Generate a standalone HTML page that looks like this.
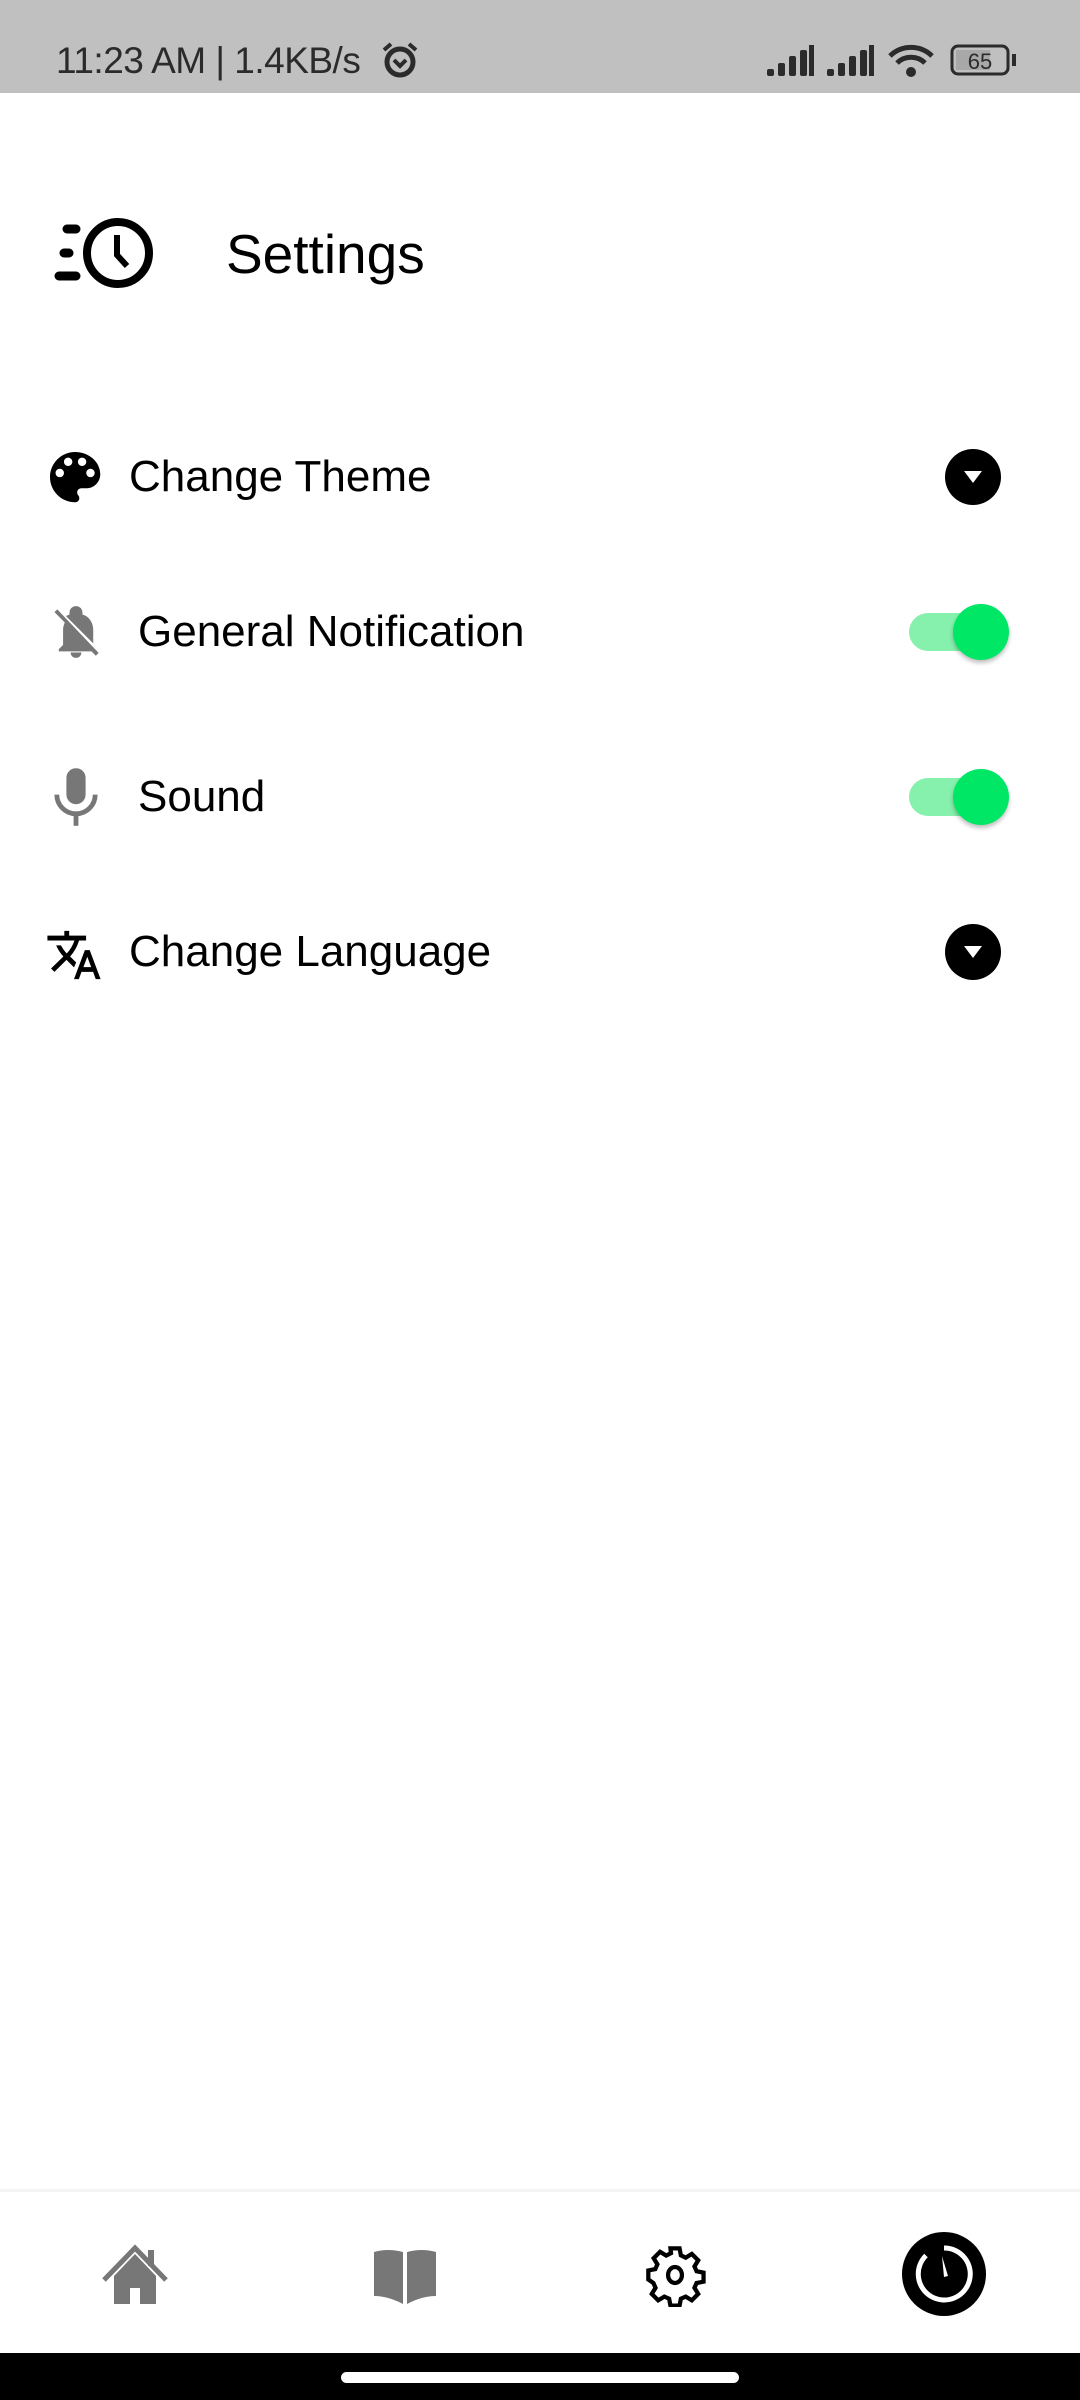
<!DOCTYPE html>
<html><head><meta charset="utf-8"><style>
*{margin:0;padding:0;box-sizing:border-box}
body{width:1080px;height:2400px;background:#fff;position:relative;overflow:hidden;font-family:"Liberation Sans",sans-serif;color:#000}
.a{position:absolute}
.sb{left:0;top:0;width:1080px;height:93px;background:#c0c0c0}
.t{font-size:44px;line-height:1;white-space:nowrap}
.dd{width:56px;height:56px;border-radius:50%;background:#000}
.dd:after{content:"";position:absolute;left:19px;top:22px;border-left:9px solid transparent;border-right:9px solid transparent;border-top:12px solid #fff}
.tr{width:86px;height:38px;border-radius:19px;background:#86f0ad}
.th{width:56px;height:56px;border-radius:50%;background:#00e766;box-shadow:0 3px 4px rgba(0,0,0,.25)}
</style></head><body>
<div class="a sb"></div>
<div class="a" style="left:56px;top:40px;font-size:37px;color:#2b2b2b;white-space:nowrap;letter-spacing:-0.5px">11:23 AM | 1.4KB/s</div>
<svg class="a" style="left:380px;top:40px" width="40" height="40" viewBox="0 0 40 40"><circle cx="20" cy="22" r="13" fill="none" stroke="#2b2b2b" stroke-width="5"/><path d="M14 20l6 6 6-6" fill="none" stroke="#2b2b2b" stroke-width="4"/><path d="M4 10l7-6M36 10l-7-6" stroke="#2b2b2b" stroke-width="4"/></svg>
<svg class="a" style="left:765px;top:44px" width="260" height="34" viewBox="0 0 260 34">
<g fill="#2b2b2b"><rect x="2" y="25" width="7" height="7" rx="2"/><rect x="13" y="19" width="7" height="13" rx="2"/><rect x="24" y="12" width="7" height="20" rx="2"/><rect x="35" y="6" width="7" height="26" rx="2"/><rect x="44" y="1" width="5" height="31"/>
<rect x="62" y="25" width="7" height="7" rx="2"/><rect x="73" y="19" width="7" height="13" rx="2"/><rect x="84" y="12" width="7" height="20" rx="2"/><rect x="95" y="6" width="7" height="26" rx="2"/><rect x="104" y="1" width="5" height="31"/></g>
<g fill="none" stroke="#2b2b2b" stroke-width="5"><path d="M125 12a30 30 0 0 1 42 0"/><path d="M132 19a20 20 0 0 1 28 0"/></g><circle cx="146" cy="28" r="5" fill="#2b2b2b"/>
<rect x="187" y="2" width="56" height="28" rx="6" fill="none" stroke="#2b2b2b" stroke-width="3"/><rect x="191" y="6" width="34" height="20" fill="#a8a8a8"/><rect x="247" y="10" width="4" height="12" fill="#2b2b2b"/>
<text x="215" y="25" font-size="22" fill="#2b2b2b" text-anchor="middle" font-family="Liberation Sans">65</text></svg>

<svg class="a" style="left:50px;top:210px" width="110" height="90" viewBox="50 210 110 90"><circle cx="118" cy="253" r="31" fill="none" stroke="#000" stroke-width="8"/><path d="M117 235v20l10 11" fill="none" stroke="#000" stroke-width="6"/><g stroke="#000" stroke-width="9" stroke-linecap="round"><path d="M67 229h9M64 253h5M59 276h17"/></g></svg>
<div class="a" style="left:226px;top:222px;font-size:55px;white-space:nowrap">Settings</div>

<svg class="a" style="left:50px;top:452px" width="67" height="67" viewBox="3 3 24 24"><path d="M12 3c-4.97 0-9 4.030-9 9s4.03 9 9 9c.83 0 1.5-.67 1.5-1.5 0-.39-.15-.74-.39-1.01-.23-.26-.38-.61-.38-.99 0-.83.67-1.5 1.5-1.5H16c2.76 0 5-2.24 5-5 0-4.42-4.03-8-9-8zm-5.5 9c-.83 0-1.5-.67-1.5-1.5S5.67 9 6.5 9 8 9.67 8 10.5 7.33 12 6.5 12zm3-4C8.67 8 8 7.33 8 6.5S8.67 5 9.5 5s1.5.67 1.5 1.5S10.33 8 9.5 8zm5 0c-.83 0-1.5-.67-1.5-1.5S13.67 5 14.5 5s1.5.67 1.5 1.5S15.33 8 14.5 8zm3 4c-.83 0-1.5-.67-1.5-1.5S16.67 9 17.5 9s1.5.67 1.5 1.5-.67 1.5-1.5 1.5z"/></svg>
<div class="a t" style="left:129px;top:455px">Change Theme</div>
<div class="a dd" style="left:945px;top:449px"></div>

<svg class="a" style="left:50px;top:604px" width="52" height="56" viewBox="0 0 24 26"><path fill="#777" d="M12 25c1.4 0 2.5-1.1 2.5-2.5h-5C9.5 23.9 10.6 25 12 25zm8-6V12c0-3.5-2.1-6.3-5-7.1V4c0-1.7-1.3-3-3-3S9 2.3 9 4v.9c-.6.2-1.1.4-1.6.8L20 18.3V19zM3.3 2.5 2 3.8l4.8 4.8C6.3 9.6 6 10.8 6 12v7l-2 2v1h15.2l2 2 1.3-1.3z"/></svg>
<div class="a t" style="left:138px;top:610px">General Notification</div>
<div class="a tr" style="left:909px;top:613px"></div><div class="a th" style="left:953px;top:604px"></div>

<svg class="a" style="left:52px;top:768px" width="48" height="58" viewBox="0 0 20 24"><rect x="6" y="0" width="8" height="15" rx="4" fill="#777"/><path d="M2 11a8 8 0 0 0 16 0" fill="none" stroke="#777" stroke-width="2"/><rect x="9" y="18" width="2" height="6" fill="#777"/></svg>
<div class="a t" style="left:138px;top:775px">Sound</div>
<div class="a tr" style="left:909px;top:778px"></div><div class="a th" style="left:953px;top:769px"></div>

<svg class="a" style="left:44px;top:926px" width="60" height="58" viewBox="0 0 24 24"><path d="M12.9 15.1l-2.5-2.5.03-.03A17.5 17.5 0 0 0 14.1 6H17V4h-7V2H8v2H1v2h11.2c-.7 2-1.7 3.8-3.2 5.4-1-1.1-1.8-2.3-2.4-3.4h-2c.7 1.6 1.7 3.2 3 4.6l-5.1 5 1.4 1.4 5-5 3.1 3.1.9-2zM18.5 10h-2L12 22h2l1.1-3h4.8l1.1 3h2l-4.5-12zm-2.6 7l1.6-4.3 1.6 4.3h-3.2z"/></svg>
<div class="a t" style="left:129px;top:930px">Change Language</div>
<div class="a dd" style="left:945px;top:924px"></div>

<div class="a" style="left:0;top:2189px;width:1080px;height:3px;background:#f4f4f4"></div>
<svg class="a" style="left:100px;top:2244px" width="70" height="62" viewBox="0 0 70 62"><path d="M14 32L35 10l21 22v28H40V44H30v16H14z" fill="#777"/><path d="M4 36L35 4l31 32" fill="none" stroke="#777" stroke-width="5"/><rect x="48" y="6" width="6" height="16" fill="#777"/></svg>
<svg class="a" style="left:372px;top:2248px" width="66" height="56" viewBox="0 0 66 56"><path d="M2 4Q16 0 31 4V56Q16 48 2 48z M64 4Q50 0 35 4V56Q50 48 64 48z" fill="#777"/></svg>
<svg class="a" style="left:643px;top:2243px" width="64" height="64" viewBox="0 0 24 24"><path fill="none" stroke="#000" stroke-width="1.6" d="M10.3 2h3.4l.5 2.6 1.8.9 2.3-1.4 2.4 2.4-1.4 2.3.8 1.8 2.6.5v3.4l-2.6.5-.8 1.8 1.4 2.3-2.4 2.4-2.3-1.4-1.8.8-.5 2.6h-3.4l-.5-2.6-1.8-.8-2.3 1.4-2.4-2.4 1.4-2.3-.8-1.8L2 13.7v-3.4l2.6-.5.8-1.8L4 5.7l2.4-2.4 2.3 1.4 1.8-.9z"/><ellipse cx="12" cy="12" rx="2.6" ry="3" fill="none" stroke="#000" stroke-width="1.6"/></svg>
<svg class="a" style="left:902px;top:2232px" width="84" height="84" viewBox="0 0 84 84"><circle cx="42" cy="42" r="42"/><path d="M42 16a26 26 0 1 1-18 7.5" fill="none" stroke="#fff" stroke-width="5"/><path d="M40 24l6 20-4 1z" fill="#fff"/></svg>
<div class="a" style="left:0;top:2353px;width:1080px;height:47px;background:#000"></div>
<div class="a" style="left:341px;top:2372px;width:398px;height:11px;border-radius:6px;background:#fff"></div>
</body></html>
